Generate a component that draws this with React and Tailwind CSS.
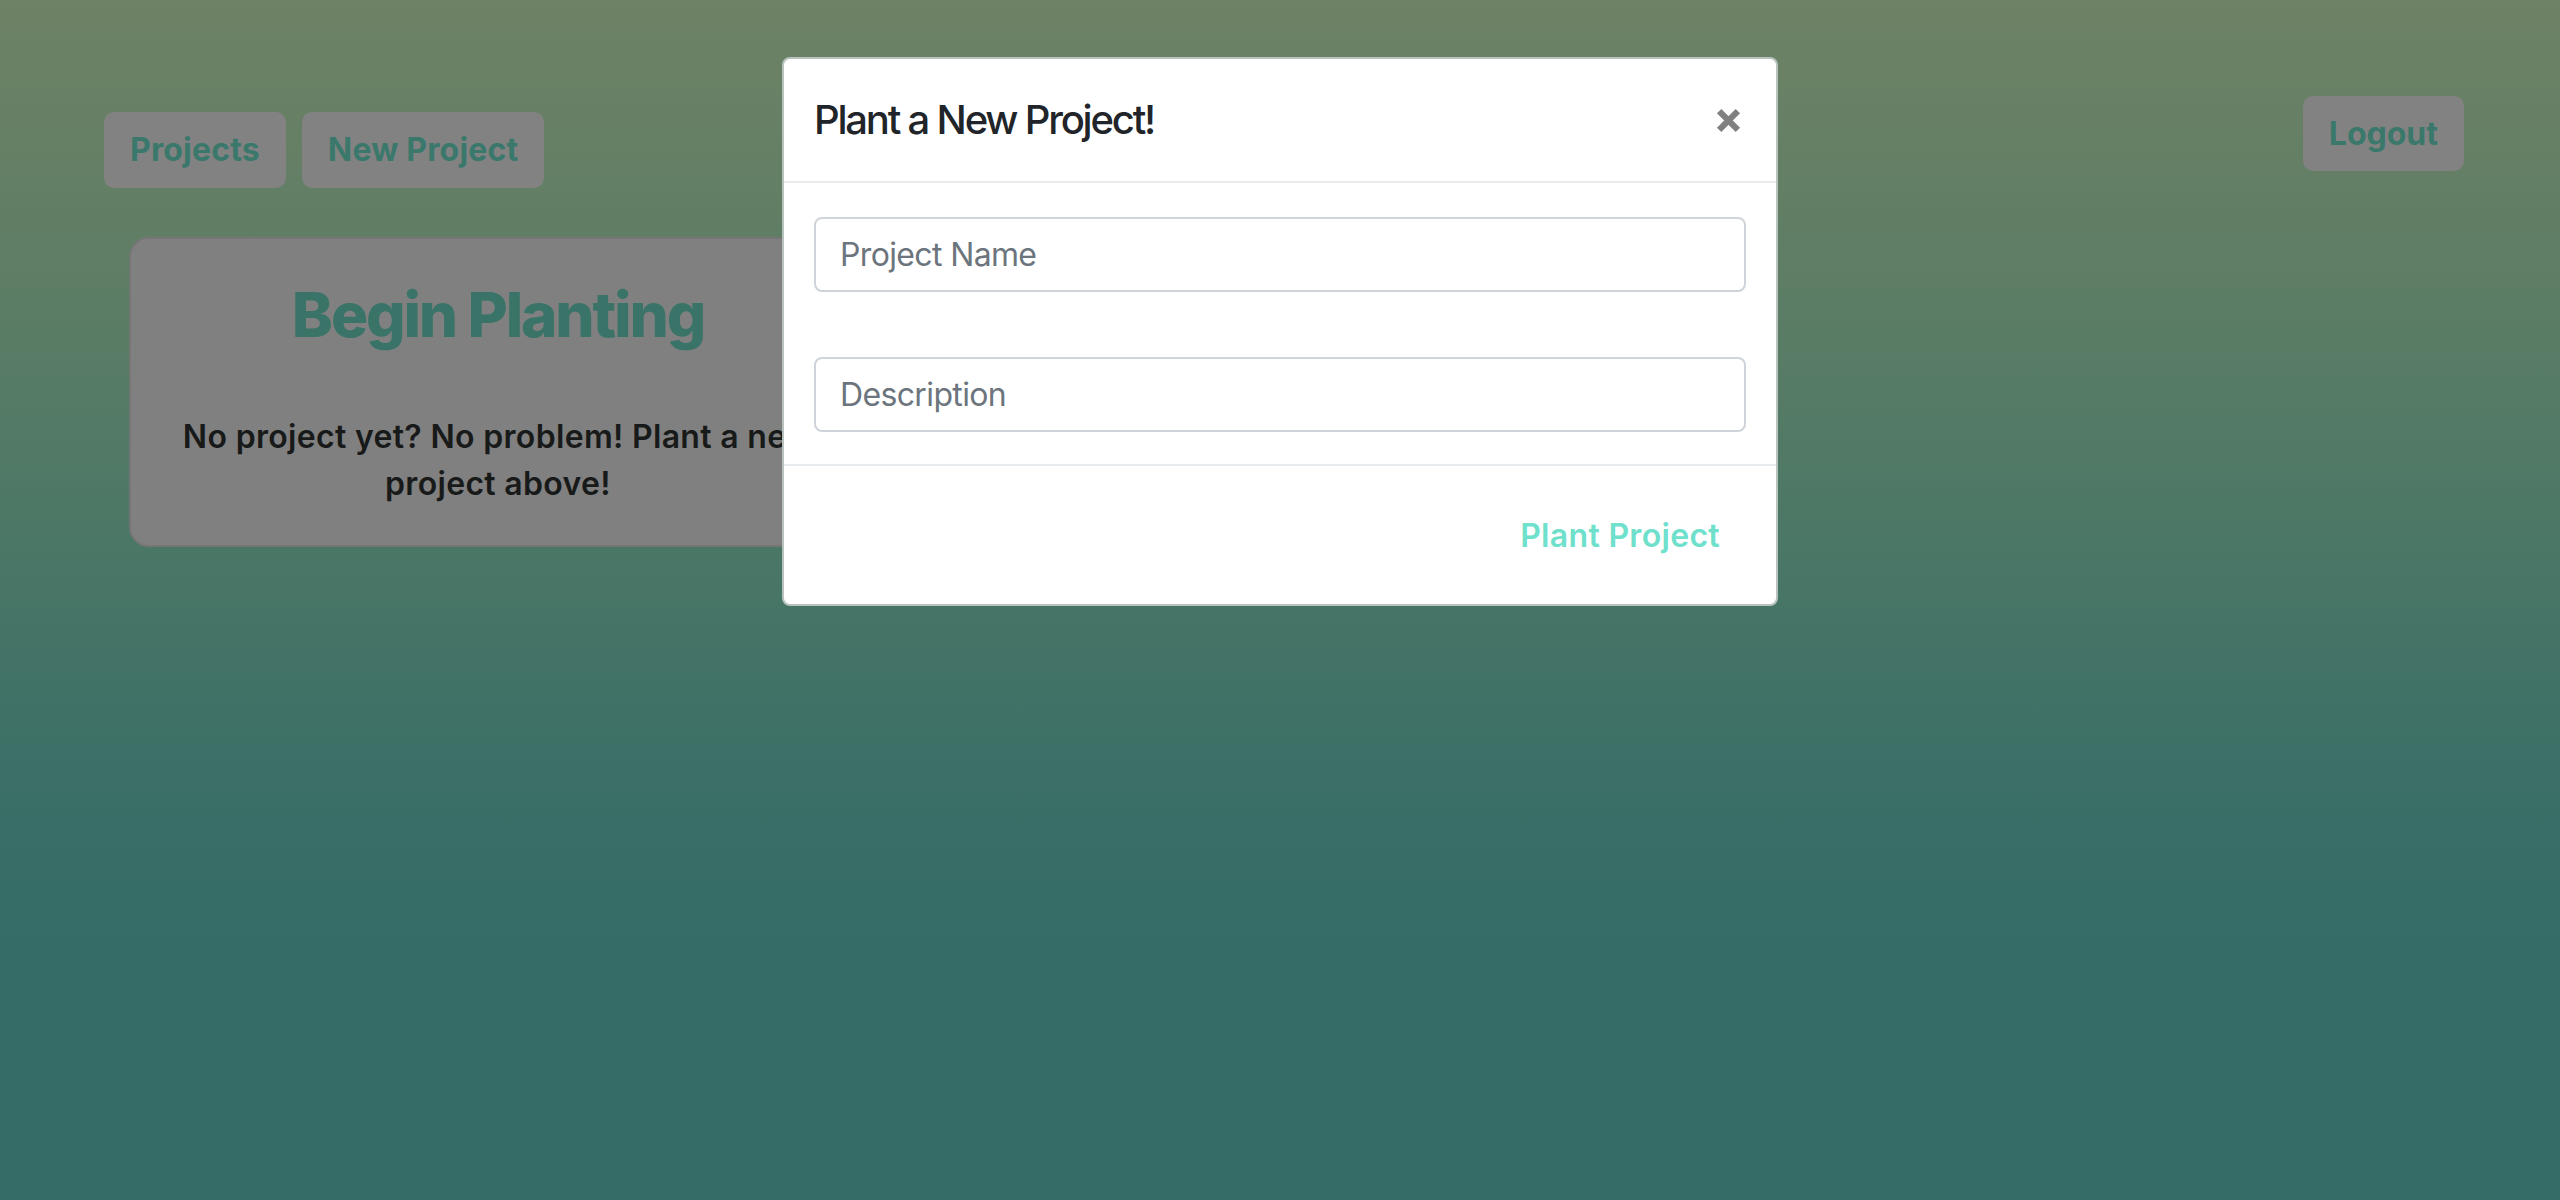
import React from 'react';

const font = { fontFamily: 'Inter, "Noto Sans", sans-serif' };

// --- NAV BUTTON ---
const NavButton = ({ label }) => (
  <button className="h-[76px] px-[26px] rounded-[10px] bg-[#828282] text-[#3a786c] text-[32px] font-bold leading-none tracking-[0.005em]">
    {label}
  </button>
);

// --- MODAL ---
const PlantModal = () => (
  <div className="absolute inset-0 flex justify-center pt-[57px]">
    <div className="w-[996px] h-fit bg-white rounded-[8px] border-2 border-[#4d6a5c]/40 flex flex-col">
      <div className="h-[124px] px-[30px] flex items-center justify-between border-b-2 border-[#e9ecef]">
        <h5 className="text-[40px] font-medium text-[#212529] tracking-[-0.055em]">Plant a New Project!</h5>
        <button className="w-[40px] h-[40px] flex items-center justify-center mr-[-2px]">
          <svg width="25" height="25" viewBox="0 0 24 24">
            <path d="M3 3 L21 21 M21 3 L3 21" stroke="#808080" strokeWidth="6" strokeLinecap="butt" />
          </svg>
        </button>
      </div>
      <div className="px-[30px] pt-[34px] pb-[32px] flex flex-col gap-[65px] border-b-2 border-[#e9ecef]">
        <input
          placeholder="Project Name"
          className="h-[75px] w-full border-2 border-[#ced4da] rounded-[8px] px-[24px] text-[32px] text-[#495057] placeholder:text-[#6c757d] outline-none tracking-[-0.02em]"
        />
        <input
          placeholder="Description"
          className="h-[75px] w-full border-2 border-[#ced4da] rounded-[8px] px-[24px] text-[32px] text-[#495057] placeholder:text-[#6c757d] outline-none tracking-[-0.02em]"
        />
      </div>
      <div className="h-[138px] flex items-center justify-end pr-[32px]">
        <button className="h-[76px] px-[24px] pt-[2px] text-[32px] font-semibold text-[#6fe0cc] tracking-[0.01em]">
          Plant Project
        </button>
      </div>
    </div>
  </div>
);

const App = () => {
  return (
    <div
      style={font}
      className="relative min-h-screen w-full bg-[linear-gradient(180deg,#6e8265_0%,#5c7d65_25%,#4b7766_45%,#396e67_68%,#366c67_80%,#366c67_100%)]"
    >
      {/* HEADER */}
      <header className="flex justify-between items-start pl-[104px] pr-[96px]">
        <div className="flex gap-[16px] mt-[112px]">
          <NavButton label="Projects" />
          <NavButton label="New Project" />
        </div>
        <div className="mt-[96px]">
          <button className="h-[75px] px-[26px] rounded-[10px] bg-[#828282] text-[#3a786c] text-[32px] font-bold leading-none">
            Logout
          </button>
        </div>
      </header>

      {/* INNEHÅLL */}
      <main className="pl-[129px] pt-[49px]">
        <div className="w-[738px] h-[310px] bg-[#808080] rounded-[20px] border-2 border-[#767676] px-[40px] pt-[36px] text-center">
          <h1 className="text-[62px] font-extrabold text-[#3a7468] tracking-[-0.035em] leading-[1.3]">Begin Planting</h1>
          <p className="mt-[57px] text-[32px] font-semibold text-[#181a1a] leading-[47px] tracking-[0.01em]">
            No project yet? No problem! Plant a new project above!
          </p>
        </div>
      </main>

      <PlantModal />
    </div>
  );
};

export default App;
